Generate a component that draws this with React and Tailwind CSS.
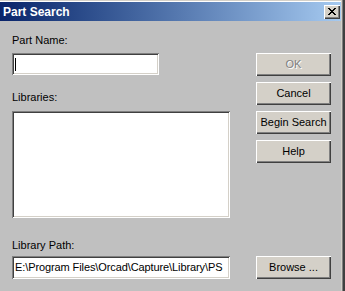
import React from "react";

const font = { fontFamily: '"Liberation Sans", Arial, sans-serif' };

function CloseGlyph() {
  const rows = [
    "XX....XX",
    ".XX..XX.",
    "..XXXX..",
    "...XX...",
    "..XXXX..",
    ".XX..XX.",
    "XX....XX",
  ];
  const rects = [];
  rows.forEach((r, y) =>
    r.split("").forEach((c, x) => {
      if (c === "X") rects.push(<rect key={`${x}-${y}`} x={x} y={y} width="1" height="1" fill="#000" />);
    })
  );
  return (
    <svg width="8" height="7" viewBox="0 0 8 7" shapeRendering="crispEdges">
      {rects}
    </svg>
  );
}

function Btn({ children, disabled }) {
  return (
    <div className="w-[75px] h-[23px] bg-[#d4d0c8] shadow-[inset_1px_1px_0_#ffffff,inset_-1px_-1px_0_#404040,inset_-2px_-2px_0_#808080] flex items-center justify-center text-[11px] leading-[13px]">
      {disabled ? (
        <span className="text-[#808080] [text-shadow:1px_1px_0_#ffffff]">{children}</span>
      ) : (
        <span className="text-black">{children}</span>
      )}
    </div>
  );
}

const sunken =
  "bg-white shadow-[inset_1px_1px_0_#808080,inset_-1px_-1px_0_#ffffff,inset_2px_2px_0_#404040,inset_-2px_-2px_0_#d4d0c8]";

export default function App() {
  return (
    <div className="w-[345px] h-[291px] bg-[#c0c0c0] flex overflow-hidden" style={font}>
      <div className="flex-1 flex flex-col">
        <div className="h-[1px] bg-[#d4d0c8]" />
        <div className="h-[1px] bg-[#ffffff]" />
        <div className="h-[19px] bg-gradient-to-r from-[#0a246a] to-[#a6caf0] flex items-center justify-between pl-[3px] pr-[1px]">
          <span className="text-white font-bold text-[12px] leading-[14px]">Part Search</span>
          <div className="w-[16px] h-[14px] bg-[#d4d0c8] shadow-[inset_1px_1px_0_#ffffff,inset_-1px_-1px_0_#404040,inset_-2px_-2px_0_#808080] flex items-center justify-center pb-[1px]">
            <CloseGlyph />
          </div>
        </div>
        <div className="flex-1 pl-[12px] pt-[13px] text-[11px] leading-[13px] text-black">
          <div className="flex">
            <div className="w-[218px] flex flex-col">
              <div>Part Name:</div>
              <div className={`mt-[6px] w-[147px] h-[22px] ${sunken} flex items-center pl-[3px]`}>
                <div className="w-[1px] h-[13px] bg-black" />
              </div>
              <div className="mt-[16px]">Libraries:</div>
              <div className={`mt-[7px] w-[218px] h-[107px] ${sunken}`} />
            </div>
            <div className="ml-[26px] mt-[19px] flex flex-col gap-[6px]">
              <Btn disabled>OK</Btn>
              <Btn>Cancel</Btn>
              <Btn>Begin Search</Btn>
              <Btn>Help</Btn>
            </div>
          </div>
          <div className="mt-[21px]">Library Path:</div>
          <div className="mt-[4px] flex">
            <div className={`w-[218px] h-[23px] ${sunken} flex items-center pl-[3px] whitespace-nowrap overflow-hidden`}>
              <span className="tracking-[-0.1px]">E:\Program Files\Orcad\Capture\Library\PS</span>
            </div>
            <div className="ml-[26px]">
              <Btn>Browse ...</Btn>
            </div>
          </div>
        </div>
        <div className="h-[3px] bg-[#c0c0c0]" />
      </div>
      <div className="w-[4px] flex">
        <div className="w-[1px] bg-[#d4d0c8]" />
        <div className="w-[1px] bg-[#808080]" />
        <div className="w-[2px] bg-[#404040]" />
      </div>
    </div>
  );
}
